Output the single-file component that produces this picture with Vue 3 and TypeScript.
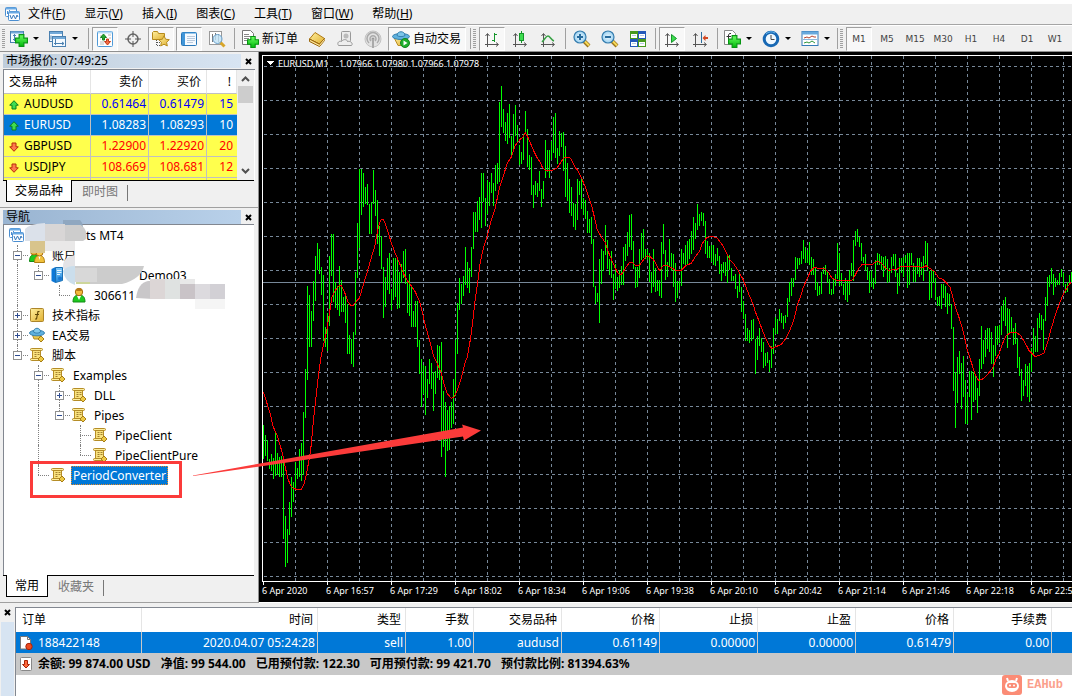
<script setup lang="ts">
interface ToolItem {
  kind: 'button' | 'drop' | 'sep' | 'grip'
  icon?: string
  label?: string
  title?: string
  pressed?: boolean
  tight?: boolean
}

interface TreeRow {
  guides: string[]
  icon: string
  label: string
  shift?: string
  selected?: boolean
}

interface Block {
  first: number
  top: number
  unit: number
  bars: string
}

const menus = [
  ['文件', 'F'], ['显示', 'V'], ['插入', 'I'], ['图表', 'C'], ['工具', 'T'], ['窗口', 'W'], ['帮助', 'H'],
]

const tools: ToolItem[] = [
  { kind: 'grip' },
  { kind: 'drop', icon: 'newchart', title: '新图表' },
  { kind: 'drop', icon: 'profiles', title: '配置文件' },
  { kind: 'sep' },
  { kind: 'button', icon: 'market', title: '市场报价', pressed: true },
  { kind: 'button', icon: 'cross', title: '数据窗口' },
  { kind: 'button', icon: 'navigator', title: '导航', pressed: true },
  { kind: 'button', icon: 'terminal', title: '终端', pressed: true },
  { kind: 'button', icon: 'tester', title: '策略测试' },
  { kind: 'sep' },
  { kind: 'button', icon: 'order', label: '新订单' },
  { kind: 'button', icon: 'editor', title: '编辑器' },
  { kind: 'button', icon: 'vps', title: '虚拟主机' },
  { kind: 'button', icon: 'signal', title: '信号' },
  { kind: 'button', icon: 'auto', label: '自动交易', pressed: true },
  { kind: 'sep' },
  { kind: 'grip' },
  { kind: 'button', icon: 'bars', title: '柱状图', pressed: true },
  { kind: 'button', icon: 'candle', title: '蜡烛图' },
  { kind: 'button', icon: 'linechart', title: '折线图' },
  { kind: 'sep' },
  { kind: 'button', icon: 'zoomin', title: '放大' },
  { kind: 'button', icon: 'zoomout', title: '缩小' },
  { kind: 'button', icon: 'tile', title: '平铺' },
  { kind: 'sep' },
  { kind: 'button', icon: 'scroll', title: '自动滚动', pressed: true },
  { kind: 'button', icon: 'shift', title: '图表平移' },
  { kind: 'sep' },
  { kind: 'drop', icon: 'indicator', title: '指标' },
  { kind: 'drop', icon: 'clock', title: '周期' },
  { kind: 'drop', icon: 'template', title: '模板' },
  { kind: 'sep', tight: true },
  { kind: 'grip' },
]
const periods = ['M1', 'M5', 'M15', 'M30', 'H1', 'H4', 'D1', 'W1']

const quotes = [
  { name: 'AUDUSD', bid: '0.61464', ask: '0.61479', spread: '15', up: true, tone: 'blue' },
  { name: 'EURUSD', bid: '1.08283', ask: '1.08293', spread: '10', up: true, tone: 'selected' },
  { name: 'GBPUSD', bid: '1.22900', ask: '1.22920', spread: '20', up: false, tone: 'red' },
  { name: 'USDJPY', bid: '108.669', ask: '108.681', spread: '12', up: false, tone: 'red' },
]

const tree: TreeRow[] = [
  { guides: [], icon: 'charts', label: 'ts MT4', shift: 'far' },
  { guides: ['tee minus'], icon: 'people', label: '账户' },
  { guides: ['line', 'end minus up'], icon: 'server', label: 'Demo03', shift: 'farther' },
  { guides: ['line', '', 'end up'], icon: 'user', label: '306611' },
  { guides: ['tee plus'], icon: 'func', label: '技术指标' },
  { guides: ['tee plus'], icon: 'hat', label: 'EA交易' },
  { guides: ['end minus'], icon: 'script', label: '脚本' },
  { guides: ['', 'tee minus'], icon: 'script', label: 'Examples' },
  { guides: ['', 'line', 'tee plus'], icon: 'script', label: 'DLL' },
  { guides: ['', 'line', 'end minus'], icon: 'script', label: 'Pipes' },
  { guides: ['', 'line', '', 'tee'], icon: 'script', label: 'PipeClient' },
  { guides: ['', 'line', '', 'end'], icon: 'script', label: 'PipeClientPure' },
  { guides: ['', 'end'], icon: 'script', label: 'PeriodConverter', selected: true },
]

const orderHeads = ['订单', '时间', '类型', '手数', '交易品种', '价格', '止损', '止盈', '价格', '手续费', '']
const order = ['188422148', '2020.04.07 05:24:28', 'sell', '1.00', 'audusd', '0.61149', '0.00000', '0.00000', '0.61479', '0.00', '']
const summary = ['余额: 99 874.00 USD', '净值: 99 544.00', '已用预付款: 122.30', '可用预付款: 99 421.70', '预付款比例: 81394.63%']

/* high-low ranges of consecutive one-minute bars, two pixels apart */
const blocks: Block[] = [
  {
    first: 0, top: -2, unit: 2.851,
    bars: `1069-1165 1097-1157 1113-1172 1165-1194 1152-1200 1163-1222 1088-1214 1149-1212 1160-1218 1157-1217
1163-1394 1328-1473 1366-1463 1289-1383 1217-1330 1232-1289 1175-1252 1191-1223 1138-1217 1120-1229
1032-1212 909-1049 673-941 698-847 744-847 660-773 587-716 550-627 567-640 620-698
641-830 790-847 750-859 587-787 525-643 525-718 661-736 672-741 616-758 655-746
704-747 697-778 723-867 813-867 823-895 804-903 633-813 493-650 339-564 339-470
351-447 391-438 382-442 439-525 433-525 342-438 399-473 428-553 502-587 530-624
620-764 647-732 593-684 579-696 681-741 593-713 593-704 596-738 633-736 610-663
573-650 567-666 655-750 639-759 672-790 744-790 716-790 716-847 827-924 881-1017
898-980 901-1041 938-992 881-951 892-967 918-1029 915-980 841-935 844-941 832-1160
972-1132 1004-1217 1026-1143 1015-1140 1004-1077 938-1066 827-987 721-867 650-741 667-724
644-701 562-670 604-678 621-693 562-647 462-567 462-519 430-519 419-485 351-507
351-433 422-502 371-468 376-445 351-408 379-444 328-402 322-382 148-376 103-220
168-238 205-260 180-268 154-250 245-302 182-282 157-246 214-264 272-328`,
  },
  {
    first: 129, top: -2, unit: 3,
    bars: `306-342 253-330 183-250 237-351 315-360 321-435 405-474 393-435 399-441 363-423
417-471 393-447 270-384 300-366 300-384 273-330 201-309 189-324 294-342 243-318
249-291 246-363 288-441 339-453 387-489 411-498 459-531 462-540 387-510 393-435
387-477 444-495 450-507 483-549 507-549 501-582 567-711 708-763 729-756 627-819
597-702 603-663 525-615 570-657 627-675 603-684 672-750 642-717 681-723 660-714
648-705 591-705 582-633 546-618 495-591 492-600 573-657 651-714 651-711 597-684
549-630 537-624 597-627 597-630 609-696 666-729 597-711 654-726 690-723 690-738
576-744 522-612 600-690 636-681 567-651 609-663 612-711 639-756 693-744 693-720
597-708 609-642 585-648 573-642 567-627 543-612 501-600 519-567 462-540 492-528
486-513 489-528 513-612 573-624 588-624 585-636 585-645 612-648 594-633 618-672
642-693 636-669 636-678 615-699 615-660 654-693 678-693 672-717 708-744 672-726
711-786 753-807 792-873 834-873 840-879 810-873 807-867 867-972 858-930 834-888
864-906 876-954 909-948 906-939 930-966 888-954 834-912 801-852 807-852 777-813
789-819 798-837 795-819 744-801 696-756 684-738`,
  },
  {
    first: 265, top: 148, unit: 3,
    bars: `234-261 171-240 174-207 174-195 153-192 120-177 141-189 150-189 126-195 171-225
177-225 204-270 246-288 258-285 216-282 201-222 195-225 216-249 237-282 267-285
237-282 222-258 129-237 159-258 219-258 252-285 234-300 243-306 210-285 189-228
120-243 93-138 87-126 111-141 129-183 171-189 162-213 201-240 213-279 210-261
234-267 180-252 159-195 162-195 168-210 171-231 168-210 177-249 204-246 171-219
162-198 162-231 219-282 174-258 174-219 171-231 165-189 159-264 159-255 159-195
189-246 198-246 174-222 174-231 186-225 168-243 123-192 129-213 213-300 210-294
210-249 234-300 291-318 288-318 252-327 252-294 258-321 279-342 282-318 312-387
381-573 516-684 471-609 453-522 489-627 468-591 540-672 582-672 513-591 513-660
516-606 528-600 564-639 477-588 378-507 420-492 390-471 384-447 384-456 396-492
435-531 378-468 378-435 375-429 318-405 300-363 291-378 324-444 327-399 351-399
384-435 369-432 414-504 471-528 507-603 540-588 492-558 498-591 489-606 444-516
384-465 408-456 354-456 339-384 345-390 357-450 291-363 231-318 225-261 204-252
222-285 234-261 240-255 219-255 207-231 219-258 252-279 246-276 225-249 216-246`,
  },
]

const barPath = blocks
  .map((b) =>
    b.bars.trim().split(/\s+/).map((pair, i) => {
      const [hi, lo] = pair.split('-').map((v) => Math.round(Number(v) / b.unit + b.top))
      return `M${4 + 2 * (b.first + i)} ${hi}h1V${lo}h-1z`
    }).join(''),
  )
  .join('')

/* moving average, sampled per section: left edge, top edge, vertical unit, points */
const averages: [number, number, number, string][] = [
  [1, -2, 2.851, '10,975 22,1010 30,1035 40,1075 50,1095 62,1133 70,1160 76,1190 84,1223 92,1242 100,1249 112,1254 124,1252 132,1238 138,1215 144,1185 152,1140 160,1060 168,990 176,920 184,870 192,835 200,800 210,740 216,705 226,685 238,671 244,671 254,692 264,718 272,728 280,728 286,720 298,708 310,670 322,632 334,592 344,560 352,520 358,495 364,482 370,482 376,496 386,525 394,550 406,580 418,606 430,636 442,658 454,672 466,690 478,715 484,735 496,785 508,825 520,870 532,895 544,920 550,945 562,980 574,993 582,990 592,970 604,935 616,890 622,875 632,820 640,760 646,710 654,655 660,610 670,565 682,530 694,485 706,450 718,395 730,360 742,322 754,305 766,272 778,258'],
  [261, -2, 3, '0,268 8,262 16,248 22,258 30,276 40,300 52,324 60,336 68,354 76,360 100,360 112,353 124,334 134,322 150,323 158,336 166,353 174,362 186,388 196,410 206,440 216,472 224,505 232,540 244,560 256,578 266,608 276,632 286,655 294,670 302,675 308,668 316,655 328,638 336,637 346,646 354,648 362,641 372,627 382,617 390,620 400,628 408,642 416,658 420,661 430,646 442,647 456,654 468,663 482,662 498,646 514,640 526,620 538,605 546,582 560,563 574,559 590,563 604,580 618,605 630,630 642,643 656,664 670,690 682,722 694,750 700,764 706,785 718,815 730,848 742,876 750,890 756,895 766,891 784,883 796,868 808,845'],
  [533, 148, 3, '0,374 8,350 16,315 26,288 34,262 46,235 56,212 66,203 98,206 108,215 120,234 132,240 152,243 180,241 190,225 200,205 210,194 238,195 256,183 268,190 280,203 290,211 316,208 326,199 376,199 390,203 402,197 412,204 428,215 440,234 452,238 464,250 474,262 482,290 490,320 502,355 514,395 526,450 538,487 550,525 560,542 572,537 586,524 602,504 612,478 622,460 634,425 644,405 658,397 672,397 686,407 700,430 712,453 722,463 730,470 742,466 756,459 766,430 778,385 790,345 802,312 814,283 826,262 838,245'],
]
const average = averages
  .map(([left, top, unit, pts]) =>
    pts.split(' ').map((p) => {
      const [x, y] = p.split(',').map(Number)
      return `${(x / 3 + left).toFixed(1)},${(y / unit + top).toFixed(1)}`
    }).join(' '),
  )
  .join(' ')

const columns = Array.from({ length: 60 }, (_, i) => 36 + 32 * i)
const rows = Array.from({ length: 16 }, (_, i) => 14 + 34 * i)
const times = ['2020', '16:57', '17:29', '18:02', '18:34', '19:06', '19:38', '20:10', '20:42', '21:14', '21:46', '22:18', '22:50']
</script>

<template>
  <div class="app">
    <svg class="defs" aria-hidden="true">
      <defs>
        <linearGradient id="gPlus" x1="0" y1="0" x2="0" y2="1"><stop offset="0" stop-color="#6dff62" /><stop offset="1" stop-color="#00b90c" /></linearGradient>
        <linearGradient id="gGold" x1="0" y1="0" x2="1" y2="1"><stop offset="0" stop-color="#fff0a0" /><stop offset="1" stop-color="#e0b030" /></linearGradient>
        <linearGradient id="gBlue" x1="0" y1="0" x2="0" y2="1"><stop offset="0" stop-color="#7cc8fa" /><stop offset="1" stop-color="#1f86dc" /></linearGradient>
        <radialGradient id="gLens"><stop offset="0" stop-color="#eaf8ff" /><stop offset="1" stop-color="#9bd0f0" /></radialGradient>
      </defs>
      <symbol id="plus" viewBox="0 0 11 11"><path d="M3.500.5h4v3h3v4h-3v3h-4v-3h-3v-4h3z" fill="url(#gPlus)" stroke="#079512" /></symbol>
      <symbol id="axes" viewBox="0 0 16 16"><path d="M3.500 2v13M1 12.500h13M1.500 4l2-2.500 2 2.500M12 10.500l2.500 2-2.500 2" fill="none" stroke="#555" /></symbol>
      <symbol id="charts" viewBox="0 0 16 16"><rect x="1.500" y="1.500" width="11" height="9" rx="1" fill="#fff" stroke="#4b8ed0" /><path d="M2 2.500h10" stroke="#6aaae4" stroke-width="2" /><path d="M3.500 5v3M5.500 4v3M7.500 5v2" stroke="#4b8ed0" /><rect x="4.500" y="5.500" width="11" height="9" rx="1" fill="#fff" stroke="#4b8ed0" /><path d="M5 6.500h10" stroke="#6aaae4" stroke-width="2" /><path d="M6 9l1.500 4L9.500 9l2 4L13 9l1 2" fill="none" stroke="#3778bb" /></symbol>
      <symbol id="newchart" viewBox="0 0 18 18"><rect x=".5" y="1.500" width="13" height="11" fill="#f4faff" stroke="#4a80b0" /><path d="M1 2.500h12" stroke="#72a9d8" stroke-width="2" /><path d="M4.500 4v7M3 9.500h4M3 5.500h3" stroke="#4a80b0" /><use href="#plus" x="5" y="4" width="13" height="13" /></symbol>
      <symbol id="profiles" viewBox="0 0 18 18"><rect x=".5" y="1.500" width="13" height="10" fill="#f4faff" stroke="#4a80b0" /><path d="M1 3h12" stroke="#72a9d8" stroke-width="2" /><rect x="3.500" y="6.500" width="13" height="10" fill="#f4faff" stroke="#4a80b0" /><path d="M4 8h12" stroke="#72a9d8" stroke-width="2" /><path d="M6.500 9v6M5 13.500h10M13 12l2 1.500-2 1.500M2 5.500v4" fill="none" stroke="#4a80b0" /></symbol>
      <symbol id="market" viewBox="0 0 18 18"><rect x="1.500" y="1.500" width="15" height="15" rx="1" fill="#fff" stroke="#4f9ad8" /><path d="M2 2.500h14" stroke="#b8dcf6" stroke-width="2" /><path d="M4 6h2M4 9h1M12 5h3M13 8h2M4 12h4M4 14h4" stroke="#bbb" /><path d="M7.500 4l3 3.500h-2V10h-2V7.500h-2z" fill="#24a832" stroke="#15821f" /><path d="M11.500 15l3-3.500h-2V9h-2v2.500h-2z" fill="#f56a42" stroke="#c33b18" /></symbol>
      <symbol id="cross" viewBox="0 0 18 18"><circle cx="9" cy="9" r="5" fill="none" stroke="#666" stroke-width="1.500" /><path d="M9 1v6M9 11v6M1 9h6M11 9h6" stroke="#555" /></symbol>
      <symbol id="star" viewBox="0 0 12 12"><path d="M6 .8l1.600 3.400 3.700.5-2.700 2.600.7 3.700L6 9.200 2.700 11l.7-3.700L.7 4.700l3.700-.5z" fill="url(#gGold)" stroke="#b58a1d" /></symbol>
      <symbol id="navigator" viewBox="0 0 18 18"><path d="M.5 9.500v-7l1-1h4l1 2h6v6z" fill="url(#gGold)" stroke="#b58a1d" /><path d="M4.500 10v6M5 12.500h3M5 15.500h3" stroke="#555" stroke-dasharray="1 1" /><use href="#star" x="6" y="5" width="12" height="12" /></symbol>
      <symbol id="terminal" viewBox="0 0 18 18"><rect x="1.500" y="2.500" width="15" height="13" rx="1" fill="#f5faff" stroke="#2876b8" /><path d="M2 3h14" stroke="#4196d8" stroke-width="1" /><path d="M3.500 3v12" stroke="#4196d8" stroke-width="3" /><path d="M7 6.500h8M7 8.500h8M7 10.500h8M7 12.500h6" stroke="#b9c9dc" /></symbol>
      <symbol id="tester" viewBox="0 0 18 18"><rect x="1.500" y="1.500" width="12" height="13" fill="#fff" stroke="#999" /><path d="M4.500 4v8M7.500 3v7M10.500 4v8" stroke="#777" /><path d="M12 12l4.500 4.500" stroke="#d8a62a" stroke-width="3" /><circle cx="9.500" cy="9" r="4.500" fill="#bfe2f6" fill-opacity=".8" stroke="#6ba0ca" /></symbol>
      <symbol id="order" viewBox="0 0 18 18"><path d="M1.500.5h8l3 3v11h-11z" fill="#fff" stroke="#777" /><path d="M3 4.500h5M3 6.500h7M3 8.500h5M3 10.500h3" stroke="#888" /><use href="#plus" x="6" y="6" width="12" height="12" /></symbol>
      <symbol id="editor" viewBox="0 0 18 18"><path d="M7 2.500l9.500 6-5 5.500L1.500 9z" fill="url(#gGold)" stroke="#b07a14" /><path d="M1.500 9v2.500l10 5 5-6V8.500l-5 5.500z" fill="#d09a2a" stroke="#9c6911" /><path d="M2 10.500l9.500 5 5-6" fill="none" stroke="#fff0b0" /></symbol>
      <symbol id="vps" viewBox="0 0 18 18"><rect x="5.500" y="1.500" width="9" height="10" rx="1" fill="#ececec" stroke="#999" /><circle cx="10" cy="6" r="2.500" fill="#bbb" /><path d="M2.500 15.500c-2-3 1-5 3-4 2-3 6-2 6 0 3-1 6 2 4 4z" fill="#eee" stroke="#999" /></symbol>
      <symbol id="signal" viewBox="0 0 18 18"><circle cx="9" cy="9" r="8" fill="#e2e2e2" stroke="#c3c3c3" /><path d="M5 13a6 6 0 1 1 8 0M7 11a3 3 0 1 1 4 0" fill="none" stroke="#aaa" stroke-width="1.500" /><circle cx="9" cy="9" r="1.500" fill="#999" /><path d="M9 9v9" stroke="#aaa" stroke-width="2" /></symbol>
      <symbol id="auto" viewBox="0 0 18 18"><path d="M2 7.500h14l-3 8H6z" fill="url(#gGold)" stroke="#b98d24" /><ellipse cx="9" cy="6.500" rx="8.500" ry="3" fill="#5fb2df" stroke="#347fae" /><path d="M5 5.500c0-5 8-5 8 0-2 1.500-6 1.500-8 0z" fill="#7cc6ea" stroke="#347fae" /><circle cx="13" cy="13" r="4.500" fill="#1fae2d" stroke="#12861d" /><path d="M11.500 10.500l4 2.500-4 2.500z" fill="#fff" /></symbol>
      <symbol id="bars" viewBox="0 0 18 18"><use href="#axes" x="1" y="2" width="16" height="16" /><path d="M11.500 3v9M11 4.500h3M9 10.500h3" stroke="#15952a" /></symbol>
      <symbol id="candle" viewBox="0 0 18 18"><use href="#axes" x="1" y="2" width="16" height="16" /><path d="M10.500 1v12" stroke="#15952a" /><rect x="8.500" y="3.500" width="4" height="7" fill="#3ddd4f" stroke="#15952a" /></symbol>
      <symbol id="linechart" viewBox="0 0 18 18"><use href="#axes" x="1" y="2" width="16" height="16" /><path d="M3 12c3-3 4-6 6-6s3 4 6 5" fill="none" stroke="#38a145" stroke-width="1.500" /></symbol>
      <symbol id="lens" viewBox="0 0 18 18"><path d="M11 11l5 5" stroke="#9b741c" stroke-width="4" /><path d="M11.500 11l4.500 4.500" stroke="#f7da58" stroke-width="2" /><circle cx="7" cy="7" r="6" fill="url(#gLens)" stroke="#347cae" stroke-width="1.200" /></symbol>
      <symbol id="zoomin" viewBox="0 0 18 18"><use href="#lens" /><path d="M4 7h6M7 4v6" stroke="#286b9d" stroke-width="2" /></symbol>
      <symbol id="zoomout" viewBox="0 0 18 18"><use href="#lens" /><path d="M4 7h6" stroke="#286b9d" stroke-width="2" /></symbol>
      <symbol id="tile" viewBox="0 0 18 18"><path d="M1 1h8v8H1zM9 9h8v8H9z" fill="#47991f" /><path d="M9 1h8v8H9zM1 9h8v8H1z" fill="#2459ba" /><path d="M2 4h6v4H2zM10 4h6v4h-6zM2 12h6v4H2zM10 12h6v4h-6z" fill="#fff" /><path d="M3 5.500h4M11 5.500h4M3 13.500h4M11 13.500h4" stroke="#b6cce5" /></symbol>
      <symbol id="scroll" viewBox="0 0 18 18"><use href="#axes" x="1" y="2" width="16" height="16" /><path d="M8.500 4.500l5 4-5 4z" fill="#3ddd4f" stroke="#15952a" /></symbol>
      <symbol id="shift" viewBox="0 0 18 18"><use href="#axes" x="1" y="2" width="16" height="16" /><path d="M10.500 2v11" stroke="#2d6d9c" /><path d="M11.500 8l3-3v2H17v2h-2.500v2z" fill="#d34822" /></symbol>
      <symbol id="indicator" viewBox="0 0 18 18"><path d="M1.500.5h8l3 3v11h-11z" fill="#fff" stroke="#888" /><path d="M8 3.500H6.500L5.500 5v7M3.500 6.500H8" fill="none" stroke="#333" /><use href="#plus" x="5" y="5" width="13" height="13" /></symbol>
      <symbol id="clock" viewBox="0 0 18 18"><circle cx="9" cy="9" r="6.800" fill="#eff8ff" stroke="#1768b4" stroke-width="3" /><path d="M4 4a7 7 0 0 1 9-1" fill="none" stroke="#68b8ee" /><path d="M9 5v4.500h3.500" fill="none" stroke="#444" /></symbol>
      <symbol id="template" viewBox="0 0 18 18"><rect x="1" y="1.500" width="16" height="14" fill="#fff" stroke="#347bb7" /><path d="M1 3h16" stroke="#68a9dc" stroke-width="3" /><path d="M3 8l3-1 2 1 3-2 2 1h2" fill="none" stroke="#b6432c" /><path d="M2 9.500h14" stroke="#8bb8db" /><path d="M3 13l3-1 2 1 3-2 3 2" fill="none" stroke="#2e963c" /></symbol>
      <symbol id="script" viewBox="0 0 16 16"><path d="M3.500 3h8v9h-8z" fill="#f9e27c" stroke="#b58d27" /><rect x="1.500" y="1.500" width="12" height="2" rx="1" fill="#fdee9e" stroke="#b58d27" /><rect x="1.500" y="11.500" width="11" height="2" rx="1" fill="#fdee9e" stroke="#b58d27" /><path d="M5.500 5.500h5M5.500 7.500h5M5.500 9.500h3" stroke="#a28032" stroke-dasharray="2 1" /><path d="M12 9l3 3-3 3-3-3z" fill="#edc944" stroke="#a67c16" /></symbol>
      <symbol id="user" viewBox="0 0 16 16"><path d="M2 15c0-5 2-7 6-7s6 2 6 7z" fill="#1dc91f" stroke="#128c16" /><path d="M6 9l2 4 2-4z" fill="#fff" /><circle cx="8" cy="5" r="3.700" fill="#f2b93c" stroke="#a86c10" /><path d="M5 4c1-4 6-4 6 0" fill="#b57818" /></symbol>
      <symbol id="people" viewBox="0 0 16 16"><path d="M.5 14.500c0-5 2-7 5-7s5 2 5 7z" fill="#1dc91f" stroke="#128c16" /><circle cx="5" cy="4.500" r="3.500" fill="#e7b33e" stroke="#a86c10" /><path d="M5.500 15.500c0-5 2-7 5-7s5 2 5 7z" fill="#f1c13c" stroke="#ad7e14" /><path d="M9.500 9l1 4 1-4z" fill="#fff" /><circle cx="10.500" cy="5.500" r="3.500" fill="#f6c951" stroke="#a86c10" /></symbol>
      <symbol id="server" viewBox="0 0 16 16"><path d="M1.500 2l4-2v16l-4-2z" fill="#0c78d8" /><path d="M5.500 .5h7v13l-7 2z" fill="url(#gBlue)" stroke="#1b70b4" /><path d="M7 3.500h4.500M7 5.500h4.500M7 7.500h3" stroke="#e3f4ff" /><circle cx="10" cy="11.500" r="2" fill="#1b79d0" /></symbol>
      <symbol id="func" viewBox="0 0 16 16"><rect x="1.500" y="1.500" width="13" height="13" rx="1" fill="url(#gGold)" stroke="#ac852a" /><path d="M10.500 4.500H9L7.500 12H6M6 7.500h4" fill="none" stroke="#604807" stroke-width="1.200" /></symbol>
      <symbol id="hat" viewBox="0 0 16 16"><path d="M3 7h9l-2 5H5z" fill="#eac64c" stroke="#b18b25" /><ellipse cx="8" cy="6" rx="7.500" ry="2.800" fill="#5eb0de" stroke="#3882b0" /><path d="M4.500 5c0-5 7-5 7 0-2 1.500-5 1.500-7 0z" fill="#83caec" stroke="#3882b0" /><path d="M12 9l3 3-3 3-3-3z" fill="#edc944" stroke="#a67c16" /></symbol>
      <symbol id="up" viewBox="0 0 10 10"><path d="M5 .7l4.300 4.500H7V9H3V5.200H.7z" fill="#3fdc52" stroke="#0a7e1b" /></symbol>
      <symbol id="down" viewBox="0 0 10 10"><path d="M5 9.300L.7 4.800H3V1h4v3.800h2.300z" fill="#ff7a4c" stroke="#b52d0a" /></symbol>
      <symbol id="doc" viewBox="0 0 14 14"><path d="M1.500.5h7l3 3v9.500h-10z" fill="#fff" stroke="#777" /><path d="M8.500.5v3h3" fill="none" stroke="#777" /><circle cx="10" cy="10.500" r="3.200" fill="#ed4a1e" stroke="#a82408" /></symbol>
      <symbol id="balance" viewBox="0 0 14 14"><rect x="1.500" y=".5" width="11" height="13" rx="1" fill="#fff" stroke="#888" /><path d="M7 11L3.500 7.500h2v-4h3v4h2z" fill="#ff6a3c" stroke="#a82408" /></symbol>
    </svg>

    <nav class="menubar">
      <svg class="i16"><use href="#charts" /></svg>
      <button v-for="m in menus" :key="m[1]" type="button">{{ m[0] }}(<u>{{ m[1] }}</u>)</button>
    </nav>

    <div class="toolbar">
      <template v-for="(t, i) in tools" :key="i">
        <span v-if="t.kind === 'grip'" class="grip"></span>
        <span v-else-if="t.kind === 'sep'" class="sep" :class="{ tight: t.tight }"></span>
        <button v-else type="button" class="tool" :class="[t.kind, { pressed: t.pressed, labelled: t.label }]" :aria-label="t.label ?? t.title">
          <svg class="i18"><use :href="'#' + t.icon" /></svg>
          <span v-if="t.label">{{ t.label }}</span>
          <i v-if="t.kind === 'drop'" class="caret"></i>
        </button>
      </template>
      <button v-for="(p, i) in periods" :key="p" type="button" class="tool period" :class="{ pressed: i === 0 }">{{ p }}</button>
    </div>

    <main class="workspace">
      <aside class="side">
        <section class="panel market">
          <header class="caption"><h2>市场报价: 07:49:25</h2><button type="button" class="close" aria-label="关闭"><svg viewBox="0 0 7 7"><path d="M1 1l5 5M6 1L1 6" /></svg></button></header>
          <div class="quotes">
            <table>
              <colgroup><col class="c-name" /><col class="c-price" /><col class="c-price" /><col class="c-spread" /></colgroup>
              <thead><tr><th>交易品种</th><th>卖价</th><th>买价</th><th>!</th></tr></thead>
              <tbody>
                <tr v-for="q in quotes" :key="q.name" :class="q.tone">
                  <td><svg class="i10"><use :href="q.up ? '#up' : '#down'" /></svg>{{ q.name }}</td>
                  <td>{{ q.bid }}</td><td>{{ q.ask }}</td><td>{{ q.spread }}</td>
                </tr>
                <tr class="more"><td></td><td></td><td></td><td></td></tr>
              </tbody>
            </table>
            <div class="scrollbar">
              <svg viewBox="0 0 9 6"><path d="M1 5l3.500-3.500L8 5" /></svg>
              <div class="thumb"></div>
              <svg viewBox="0 0 9 6"><path d="M1 1l3.500 3.500L8 1" /></svg>
            </div>
          </div>
          <div class="tabs"><button type="button" class="on">交易品种</button><button type="button">即时图</button></div>
        </section>

        <section class="panel navigator">
          <header class="caption active"><h2>导航</h2><button type="button" class="close" aria-label="关闭"><svg viewBox="0 0 7 7"><path d="M1 1l5 5M6 1L1 6" /></svg></button></header>
          <div class="tree">
            <ul>
              <li v-for="r in tree" :key="r.label">
                <span v-for="(g, i) in r.guides" :key="i" class="guide" :class="g"></span>
                <svg class="node"><use :href="'#' + r.icon" /></svg>
                <span class="name" :class="[r.shift, { selected: r.selected }]">{{ r.label }}</span>
              </li>
            </ul>
            <svg class="mosaic" aria-hidden="true">
              <path d="M59 2V-5h17q3 3 3 7z" fill="#8fa7c0" />
              <path d="M41 0h36q7 5 5 14l-3 2H41z" fill="#cdcdcd" />
              <path d="M21 16V4q4-5 20-6v18z" fill="#dbe1ea" />
              <path d="M41 -1h20v17H41z" fill="#d8d6d6" />
              <path d="M26 16h15v12H26z" fill="#d8c48c" />
              <path d="M41 16h30v10H41z" fill="#e9e8e8" />
              <path d="M59 43q-1-11 12-13v17H62z" fill="#e3e3e6" />
              <path d="M59 46q3-5 12-5v19q-10-3-12-14z" fill="#cbdeec" />
              <path d="M71 41h69q-3 13-22 18H80l-9-4z" fill="#cccccc" />
              <path d="M71 43h22v14H71z" fill="#d8d8d8" />
              <path d="M72 57h14v2H72z" fill="#cdd69b" />
              <path d="M132 73q2-15 12-17h5v18z" fill="#c9c7c9" />
              <path d="M146 54h15v20h-15z" fill="#dcd6d6" />
              <path d="M161 54h15v20h-15z" fill="#dfe2e1" />
              <path d="M176 54h15v20h-15z" fill="#c9c3c7" />
              <path d="M191 59h15v15h-15z" fill="#dcdade" />
              <path d="M206 59h15v15h-15z" fill="#d2d0d5" />
              <path d="M191 74h30v10h-30z" fill="#f5f5f5" />
              <path d="M176 54h15v5h-15z" fill="#e8e8e8" />
            </svg>
          </div>
          <div class="tabs"><button type="button" class="on">常用</button><button type="button">收藏夹</button></div>
        </section>
      </aside>

      <section class="chart" aria-label="EURUSD,M1">
        <svg class="plot" shape-rendering="crispEdges">
          <g class="grid">
            <line v-for="x in columns" :key="'c' + x" :x1="x + 0.5" :x2="x + 0.5" y1="4" y2="529" />
            <line v-for="y in rows" :key="'r' + y" x1="5" x2="100%" :y1="y + 0.5" :y2="y + 0.5" />
          </g>
          <path class="price" d="M3 230.500H4000" />
          <path :d="barPath" fill="#00ff00" />
          <polyline class="average" :points="average" />
          <path class="frame" d="M4000 3.500H3.500V529.500H4000" />
          <path v-for="(t, i) in times" :key="t" class="frame" :d="`M${4.5 + 64 * i} 530v3`" />
          <path d="M7 9h8l-4 4z" fill="#fff" />
          <g shape-rendering="auto">
            <text x="19" y="15">EURUSD,M1</text>
            <text x="80" y="15">1.07966 1.07980 1.07966 1.07978</text>
            <text v-for="(t, i) in times" :key="t" :x="3 + 64 * i" y="542">6 Apr {{ t }}</text>
          </g>
        </svg>
      </section>

      <svg class="marks" aria-hidden="true">
        <rect x="31.500" y="410.500" width="149" height="34" fill="none" stroke="#fb3b3a" stroke-width="3" />
        <path d="M193 423.500L260 411.500l203-36-1-3 19 6-17 10-1-4-203 30-67 9.500z" fill="#fb3b3a" />
      </svg>
    </main>

    <section class="terminal">
      <div class="strip"><button type="button" class="close" aria-label="关闭"><svg viewBox="0 0 7 7"><path d="M1 1l5 5M6 1L1 6" /></svg></button></div>
      <div class="orders">
        <table>
          <colgroup><col class="o1" /><col class="o2" /><col class="o3" /><col class="o4" /><col class="o3" /><col v-for="n in 5" :key="n" class="o5" /><col /></colgroup>
          <thead><tr><th v-for="(h, i) in orderHeads" :key="i">{{ h }}</th></tr></thead>
          <tbody>
            <tr class="open">
              <td v-for="(c, i) in order" :key="i"><svg v-if="i === 0" class="i14"><use href="#doc" /></svg>{{ c }}</td>
            </tr>
            <tr class="summary">
              <td :colspan="orderHeads.length"><div><svg class="i14"><use href="#balance" /></svg><span v-for="s in summary" :key="s">{{ s }}</span></div></td>
            </tr>
          </tbody>
        </table>
        <div class="brand">
          <svg viewBox="0 0 20 20"><rect width="20" height="20" rx="3" fill="#fb8c76" /><path d="M6 6L5 3M14 6l1-3" stroke="#fff" stroke-width="2" /><ellipse cx="10" cy="11" rx="7" ry="6" fill="#fff" /><rect x="5" y="8" width="10" height="5" rx="2.500" fill="#fb8c76" /><circle cx="8" cy="10.500" r="1" fill="#fff" /><circle cx="12" cy="10.500" r="1" fill="#fff" /></svg>
          <span>EAHub</span>
        </div>
      </div>
    </section>
  </div>
</template>

<style>
body { margin: 0; }
</style>

<style scoped>
.app {
  display: flex;
  flex-direction: column;
  height: 100vh;
  overflow: hidden;
  background: #f0f0f0;
  color: #000;
  font: 12px/16px "Noto Sans", "Noto Sans CJK SC", sans-serif;
}
.app * { box-sizing: border-box; }
.defs { position: absolute; width: 0; height: 0; }
button { margin: 0; padding: 0; border: 0; background: none; color: inherit; font: inherit; white-space: nowrap; }
table { width: 100%; border-spacing: 0; table-layout: fixed; }
th { font-weight: 400; }
svg { flex: none; display: block; }
.i10 { width: 10px; height: 10px; }
.i14 { width: 14px; height: 14px; }
.i16 { width: 16px; height: 16px; }
.i18 { width: 18px; height: 18px; }

.menubar {
  display: flex;
  flex: none;
  align-items: center;
  gap: 19px;
  height: 25px;
  padding-left: 4px;
  border-top: 4px solid #fff;
  border-bottom: 1px solid #a5a5a5;
}
.menubar svg { margin-right: -11px; }

.toolbar {
  display: flex;
  flex: none;
  align-items: center;
  height: 27px;
  overflow: hidden;
  border-top: 1px solid #fff;
  border-bottom: 1px solid #909090;
}
.grip {
  flex: none;
  width: 3px;
  height: 20px;
  margin-right: 2px;
  background: repeating-linear-gradient(#a0a0a0 0 1px, #f0f0f0 1px 2px);
}
.grip:first-child { margin-left: 2px; }
.sep { flex: none; width: 1px; height: 21px; margin: 0 2px 0 3px; background: #a0a0a0; }
.sep.tight { margin-left: 0; }
.tool {
  display: flex;
  flex: none;
  align-items: center;
  justify-content: center;
  width: 26px;
  height: 24px;
  margin: 0 1px;
}
.drop { width: 37px; justify-content: flex-start; gap: 5px; padding-left: 2px; }
.labelled { width: auto; gap: 3px; padding: 0 4px 0 3px; }
.pressed { border: 1px solid #a0a0a0; border-right-color: #fff; border-bottom-color: #fff; background: #f8f8f8; }
.caret { border: 3px solid transparent; border-top-color: #000; border-bottom: 0; }
.period { color: #444; font: 9px/12px "DejaVu Sans", sans-serif; }

.workspace { position: relative; display: flex; flex: 1; min-height: 0; }
.side { display: flex; flex: none; flex-direction: column; width: 259px; border-bottom: 1px solid #a0a0a0; border-right: 1px solid #909090; }
.panel { display: flex; flex-direction: column; padding: 2px 3px 4px 3px; }
.navigator { flex: 1; min-height: 0; border-top: 1px solid #a0a0a0; }
.caption { display: flex; flex: none; align-items: center; height: 14px; margin-bottom: 1px; }
.caption h2 {
  flex: 1;
  margin: 0;
  padding-left: 3px;
  background: linear-gradient(90deg, #bfcddb, #d7e4f2);
  font-size: 12px;
  font-weight: 400;
  line-height: 14px;
}
.caption.active { margin-bottom: 0; }
.caption.active h2 { background: linear-gradient(90deg, #99b4d1, #b9d1ea); }
.close { display: flex; justify-content: center; width: 14px; height: 7px; }
.close svg { width: 7px; height: 7px; fill: none; stroke: #000; stroke-width: 2; }

.quotes { display: flex; height: 111px; overflow: hidden; border-top: 1px solid #828790; border-left: 1px solid #828790; background: #fff; }
.quotes table { flex: none; width: 233px; height: 110px; }
.c-name { width: 87px; }
.c-price { width: 58px; }
.c-spread { width: 30px; }
.quotes th { height: 24px; padding: 0 5px; border-right: 1px solid #e5e5e5; border-bottom: 1px solid #c0c0c0; text-align: right; }
.quotes th:first-child, .quotes td:first-child { text-align: left; }
.quotes td { height: 21px; padding: 0 2px; border-right: 1px solid #c0c0c0; border-bottom: 1px solid #c0c0c0; background: #ffff4d; text-align: right; line-height: 16px; }
.quotes td:first-child { padding-left: 5px; color: #000; }
.quotes td:last-child { padding-right: 4px; border-right: 0; }
.quotes td svg { display: inline-block; margin-right: 5px; vertical-align: -2px; }
.quotes .blue td { color: #0000ff; }
.quotes .red td { color: #ff0000; }
.quotes .blue td:first-child, .quotes .red td:first-child { color: #000; }
.quotes .selected td, .quotes .selected td:first-child { background: #0078d7; color: #fff; }
.quotes .more td { height: 2px; padding: 0; border-bottom: 0; }
.scrollbar { display: flex; flex-direction: column; align-items: center; width: 17px; padding: 6px 0; background: #f0f0f0; }
.scrollbar svg { width: 9px; height: 6px; fill: none; stroke: #505050; stroke-width: 2; }
.thumb { width: 15px; height: 17px; margin: 4px 0 auto; background: #cdcdcd; }

.tabs { display: flex; flex: none; height: 23px; padding-left: 3px; border-top: 1px solid #000; margin-right: 1px; }
.tabs button { position: relative; height: 22px; padding: 0 10px; color: #777; line-height: 20px; }
.tabs button:not(.on)::after { content: ""; position: absolute; top: 4px; right: 0; height: 16px; border-right: 1px solid #777; }
.tabs .on { padding: 0 8px; border: solid #000; border-width: 0 1px 1px 1px; background: #fff; color: #000; margin-top: -1px; height: 22px; }

.tree { position: relative; flex: 1; min-height: 0; margin-right: 1px; padding-left: 3px; border-top: 1px solid #828790; border-left: 1px solid #828790; background: #fff; }
.tree ul { margin: 0; padding: 0; list-style: none; }
.tree li { display: flex; align-items: center; height: 20px; }
.guide { position: relative; flex: none; width: 21px; height: 20px; }
.guide.line::before, .guide.tee::before, .guide.end::before { content: ""; position: absolute; left: 10px; top: 0; height: 20px; border-left: 1px dotted #808080; }
.guide.end::before { height: 10px; }
.guide.tee, .guide.end { background: repeating-linear-gradient(90deg, #808080 0 1px, transparent 1px 2px) 10px 10px / 11px 1px no-repeat; }
.guide.plus::after, .guide.minus::after {
  content: "";
  position: absolute;
  left: 6px;
  top: 6px;
  width: 9px;
  height: 9px;
  border: 1px solid #919191;
  box-sizing: border-box;
}
.guide.minus::after { background: linear-gradient(#2d4b91, #2d4b91) 1px 3px / 5px 1px no-repeat, #fff; }
.guide.plus::after { background: linear-gradient(#2d4b91, #2d4b91) 1px 3px / 5px 1px no-repeat, linear-gradient(#2d4b91, #2d4b91) 3px 1px / 1px 5px no-repeat, #fff; }
.node { width: 16px; height: 16px; margin: 0 5px 0 1px; }
.name { padding: 0 2px; line-height: 19px; white-space: nowrap; }
.far { margin-left: 55px; }
.farther { margin-left: 66px; }
.name.selected { background: #0078d7; color: #fff; outline: 1px dotted #e88b28; outline-offset: -1px; }
.mosaic { position: absolute; top: 0; left: 0; width: 100%; height: 90px; overflow: visible; }

.chart { flex: 1; min-width: 0; overflow: hidden; background: #000; border-bottom: 1px solid #fff; }
.plot { width: 100%; height: 550px; }
.grid line { stroke: #778899; stroke-dasharray: 3 3; }
.price { stroke: #778899; fill: none; }
.average { fill: none; stroke: #ff0000; }
.frame { fill: none; stroke: #fff; }
.plot text { fill: #fff; font: 9px "Noto Sans", sans-serif; white-space: pre; }
.marks { position: absolute; inset: 0; width: 100%; height: 100%; pointer-events: none; }

.terminal { display: flex; flex: none; height: 93px; padding-top: 4px; }
.strip { flex: none; width: 13px; margin: 1px 1px 0; background: linear-gradient(#f0f0f0 0 14px, #d7e4f2 14px); }
.strip .close { width: 12px; margin-top: 1px; }
.orders { position: relative; flex: 1; min-width: 0; border-top: 1px solid #828790; border-left: 1px solid #828790; background: #fff; }
.o1 { width: 126px; }
.o2 { width: 176px; }
.o3 { width: 88px; }
.o4 { width: 68px; }
.o5 { width: 98px; }
.orders th { height: 24px; padding: 0 4px; border-right: 1px solid #e5e5e5; text-align: right; }
.orders th:first-child { padding-left: 6px; text-align: left; }
.orders td { height: 21px; padding: 0 2px; text-align: right; }
.open td { background: #0078d7; border-right: 1px solid #c8c8c8; color: #fff; }
.open td:first-child { text-align: left; }
.open svg { display: inline-block; margin: 0 5px 0 1px; vertical-align: -3px; }
.orders th:last-child, .open td:last-child { border-right: 0; }
.orders .summary td { height: 22px; background: #c8c8c8; font-weight: 700; }
.summary div { display: flex; align-items: center; gap: 10px; white-space: nowrap; }
.summary svg { margin: 0 -5px 0 1px; }
.brand { position: absolute; right: 9px; bottom: 1px; display: flex; align-items: center; gap: 5px; color: #fb9f8c; font: 700 12px/20px "Liberation Mono", monospace; }
.brand svg { width: 20px; height: 20px; }
</style>
